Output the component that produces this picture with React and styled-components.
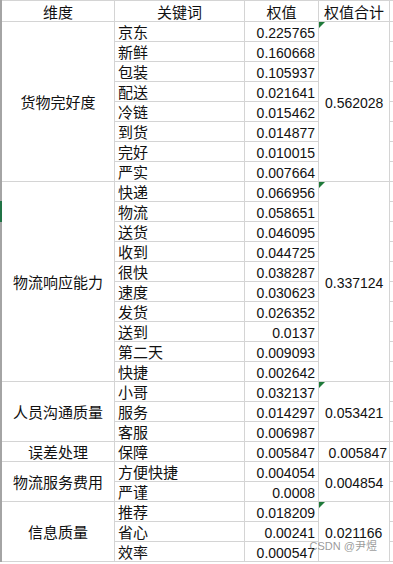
import React from "react";
import styled, { createGlobalStyle } from "styled-components";

const Global = createGlobalStyle`
  html, body { margin: 0; padding: 0; background: #fff; }
  body { font-family: "Liberation Sans", "Noto Sans CJK SC", sans-serif; color: #111; }
`;

const groups = [
  {
    name: "货物完好度", total: "0.562028", flag: true,
    items: [["京东", "0.225765"], ["新鲜", "0.160668"], ["包装", "0.105937"], ["配送", "0.021641"], ["冷链", "0.015462"], ["到货", "0.014877"], ["完好", "0.010015"], ["严实", "0.007664"]],
  },
  {
    name: "物流响应能力", total: "0.337124", flag: true,
    items: [["快递", "0.066956"], ["物流", "0.058651"], ["送货", "0.046095"], ["收到", "0.044725"], ["很快", "0.038287"], ["速度", "0.030623"], ["发货", "0.026352"], ["送到", "0.0137"], ["第二天", "0.009093"], ["快捷", "0.002642"]],
  },
  {
    name: "人员沟通质量", total: "0.053421", flag: true,
    items: [["小哥", "0.032137"], ["服务", "0.014297"], ["客服", "0.006987"]],
  },
  { name: "误差处理", total: "0.005847", right: true, items: [["保障", "0.005847"]] },
  { name: "物流服务费用", total: "0.004854", items: [["方便快捷", "0.004054"], ["严谨", "0.0008"]] },
  {
    name: "信息质量", total: "0.021166", flag: true,
    items: [["推荐", "0.018209"], ["省心", "0.00241"], ["效率", "0.000547"]],
  },
];

const Sheet = styled.div`
  position: relative;
  border-left: 2px solid #a4a4a4;
  width: 391px;
`;

const Grid = styled.div`
  display: grid;
  grid-template-columns: 112px 129px 73px 70px 1fr;
  grid-template-rows: 20px repeat(27, 19px);
  gap: 1px;
  padding: 1px 0;
  background: #d4d4d4;
`;

const Cell = styled.div`
  position: relative;
  background: #fff;
  grid-column: ${(p) => p.$col};
  grid-row: ${(p) => p.$row} / span ${(p) => p.$span || 1};
  display: flex;
  align-items: center;
  justify-content: ${(p) => (p.$align === "right" ? "flex-end" : p.$align === "left" ? "flex-start" : "center")};
  padding: 3px ${(p) => p.$pr || 0}px 0 ${(p) => p.$pl || 0}px;
  box-sizing: border-box;
  font-size: ${(p) => (p.$num ? 14 : 15)}px;
  line-height: 16px;
  white-space: nowrap;
  color: #111;
`;

const Filler = styled.div`
  background: #fff;
  grid-column: 5;
  grid-row: ${(p) => p.$row};
`;

const Flag = styled.span`
  position: absolute;
  top: 0;
  left: 0;
  width: 0;
  height: 0;
  border-top: 6px solid #1f7a3a;
  border-right: 6px solid transparent;
`;

const RowMark = styled.span`
  position: absolute;
  left: -2px;
  top: 201px;
  width: 2px;
  height: 21px;
  background: #217346;
`;

const Watermark = styled.span`
  position: absolute;
  right: 16px;
  bottom: 9px;
  font-size: 11px;
  color: rgba(120, 120, 120, 0.75);
  white-space: nowrap;
`;

export default function App() {
  const cells = [];
  let row = 2;
  groups.forEach((g, gi) => {
    const n = g.items.length;
    cells.push(
      <Cell key={`g${gi}`} $col={1} $row={row} $span={n}>{g.name}</Cell>
    );
    cells.push(
      <Cell key={`t${gi}`} $col={4} $row={row} $span={n} $num
        $align={g.right ? "right" : "left"} $pl={g.right ? 0 : 6} $pr={g.right ? 2 : 0}>
        {g.flag && <Flag />}
        {g.total}
      </Cell>
    );
    g.items.forEach(([k, v], i) => {
      cells.push(<Cell key={`k${gi}-${i}`} $col={2} $row={row + i} $align="left" $pl={3}>{k}</Cell>);
      cells.push(<Cell key={`v${gi}-${i}`} $col={3} $row={row + i} $align="right" $pr={3} $num>{v}</Cell>);
    });
    row += n;
  });
  const fillers = Array.from({ length: 28 }, (_, i) => <Filler key={`f${i}`} $row={i + 1} />);

  return (
    <>
      <Global />
      <Sheet>
        <Grid>
          <Cell $col={1} $row={1}>维度</Cell>
          <Cell $col={2} $row={1}>关键词</Cell>
          <Cell $col={3} $row={1}>权值</Cell>
          <Cell $col={4} $row={1}>权值合计</Cell>
          {cells}
          {fillers}
        </Grid>
        <RowMark />
        <Watermark>CSDN @尹煜</Watermark>
      </Sheet>
    </>
  );
}
